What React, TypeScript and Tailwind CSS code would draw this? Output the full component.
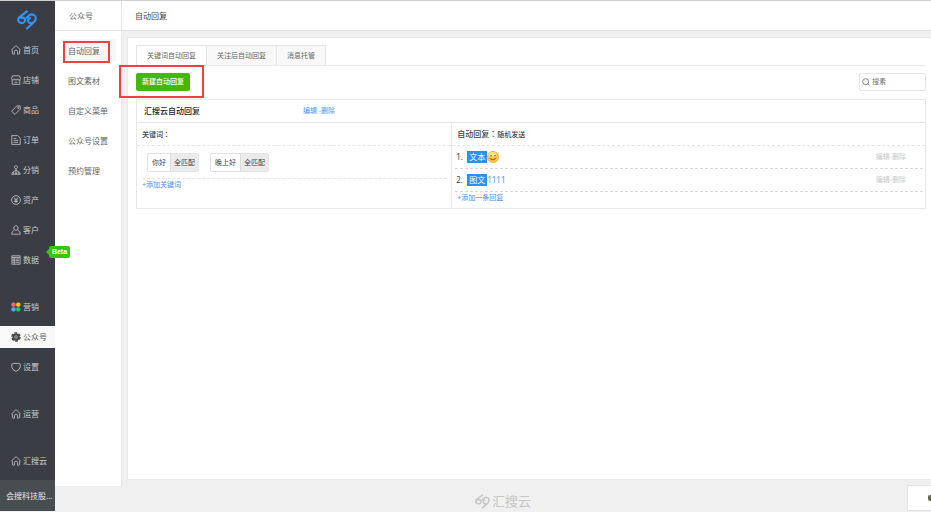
import React from "react";

const mainNav = [
    { label: "首页", icon: "home" },
    { label: "店铺", icon: "shop" },
    { label: "商品", icon: "tag" },
    { label: "订单", icon: "order" },
    { label: "分销", icon: "share" },
    { label: "资产", icon: "money" },
    { label: "客户", icon: "user" },
    { label: "数据", icon: "data", beta: true },
];

const toolNav = [
    { label: "营销", icon: "market" },
    { label: "公众号", icon: "gear", active: true },
    { label: "设置", icon: "shield" },
];

const subNav = ["自动回复", "图文素材", "自定义菜单", "公众号设置", "预约管理"];

const tabs = ["关键词自动回复", "关注后自动回复", "消息托管"];

const keywords = ["你好", "晚上好"];

const replies = [
    { type: "文本", text: "" },
    { type: "图文", text: "1111" },
];

function Logo(props: any) {
    return (
        <svg viewBox="0 0 20 20" className={props.className} fill="none" stroke="currentColor" strokeWidth="2.1" strokeLinejoin="round">
            <path d="M10.6 .8 2.2 7.4C.4 9 .9 12.8 4.2 13.1 6.8 13.3 8.8 11 7.9 9 7 7.3 4.8 7.2 3.4 8.3" />
            <path d="M9 8.2 12.4 5.2C15.2 3.2 19 5.2 18.8 8.4 18.7 10.2 17.8 11.4 16.6 12.4L9.4 19M16.6 12.4C14.6 13.9 11.2 13.2 11 10.6 10.9 9 12.2 8 13.8 8" />
        </svg>
    )
}

function NavIcon(props: any) {
    const line = { fill: "none", stroke: "currentColor", strokeWidth: 0.8 };

    return (
        <svg viewBox="0 0 10 10" className="w-[10px] h-[10px] shrink-0" aria-hidden="true">
            {props.name === "home" && <path {...line} d="M3.4 9.2H2.2Q1.4 9.2 1.4 8.4V5.4Q.2 5.2 .9 4.5L4.2 1.3Q5 .6 5.8 1.3L9.1 4.5Q9.8 5.2 8.6 5.4V8.4Q8.6 9.2 7.8 9.2H6.6V6.6Q6.6 5.2 5 5.2T3.4 6.6Z" />}
            {props.name === "shop" && <path {...line} d="M1.6.8H8.4L9.5 3.4Q9.5 5 8 5T6.5 3.8Q6.5 5 5 5T3.5 3.8Q3.5 5 2 5T.5 3.4ZM1.2 5V9.3H8.8V5M3.5 7.2H6.5" />}
            {props.name === "tag" && <><path {...line} d="M5.8 1 9 .8 9.4 4 4 9.4.6 6.2Z" /><circle {...line} cx="7.3" cy="2.9" r=".7" /></>}
            {props.name === "order" && <path {...line} d="M.8.6H6.8L9.2 3V9.4H.8ZM2.6 3.4H5.4M2.6 5.3H7.2M2.6 7.3H7.2" />}
            {props.name === "share" && <path {...line} d="M5 .6A1.5 1.5 0 1 1 4.9.6M5 3.6V8M5 5 2 7M5 5 8 7M.7 9.3 2 7 3.3 9.3ZM6.7 9.3 8 7 9.3 9.3ZM4 9.3 5 7.6 6 9.3Z" />}
            {props.name === "money" && <><circle {...line} cx="5" cy="5" r="4.4" /><path {...line} d="M3.1 2.5 5 4.8 6.9 2.5M5 4.8V8M3.2 5H6.8M3.2 6.5H6.8" /></>}
            {props.name === "user" && <path {...line} d="M5 .7A2.2 2.3 0 1 1 4.9.7M3.4 5Q.8 6.2.7 9.2H9.3Q9.2 6.2 6.6 5" />}
            {props.name === "data" && <path {...line} d="M.9.8H9.1V9.2H.9ZM.9 2.4H9.1M3.4 2.4V9.2M4.4 4H8M4.4 5.6H8M4.4 7.3H8M1.4 4H3M1.4 5.6H3M1.4 7.3H3" />}
            {props.name === "shield" && <path {...line} d="M.8 1.9Q2 2 2.8 1.2 5 2.2 7.2 1.2 8 2 9.2 1.9V5Q8.8 8 5 9.4 1.2 8 .8 5Z" />}
            {props.name === "market" && (
                <>
                    <rect x=".3" y=".4" width="4.4" height="4.4" rx="1.8" fill="#f8626c" />
                    <rect x="5.1" y=".4" width="4.4" height="4.4" rx="1.8" fill="#fdc31c" />
                    <rect x=".3" y="5.2" width="4.4" height="4.4" rx="1.8" fill="#59a3f8" />
                    <rect x="5.1" y="5.2" width="4.4" height="4.4" rx="1.8" fill="#20c75a" />
                </>
            )}
            {props.name === "gear" && (
                <>
                    <circle cx="5" cy="5" r="3.7" fill="#484848" />
                    <circle cx="5" cy="5" r="4.1" fill="none" stroke="#484848" strokeWidth="1.4" strokeDasharray="2.7 1.594" />
                    <circle cx="5" cy="5" r="1.3" fill="none" stroke="#ccc" strokeWidth=".7" />
                </>
            )}
        </svg>
    )
}

function NavItem(props: any) {
    return (
        <li className="relative">
            <a href="#" className={`flex items-center gap-[2px] h-[22px] pl-[11px] whitespace-nowrap ${props.active ? "bg-[#f9f9f9] text-[#555]" : "text-[#c9cacc]"}`}>
                <NavIcon name={props.icon} />
                <span>{props.label}</span>
            </a>
            {props.beta && (
                <span className="absolute left-[49px] -top-[3px] z-10 w-[21px] h-3 rounded-xs bg-[#35c60f] text-white text-[7px] leading-3 text-center font-bold font-['Liberation_Sans',sans-serif]">
                    <i className="absolute -left-[3px] top-[3px] border-y-3 border-r-3 border-y-transparent border-r-[#35c60f]"></i>
                    Beta
                </span>
            )}
        </li>
    )
}

// the TC face centres the full-width colon
function Colon() {
    return <span className="font-['Noto_Sans_CJK_TC',sans-serif]">：</span>
}

function Smile() {
    return (
        <svg viewBox="0 0 12 12" className="w-3 h-3" role="img" aria-label="微笑">
            <circle cx="6" cy="6" r="5.7" fill="#f8c936" stroke="#dc9a26" strokeWidth=".5" />
            <ellipse cx="5.4" cy="3.6" rx="4" ry="2.6" fill="#fde375" />
            <ellipse cx="3.8" cy="4.6" rx="1.3" ry="1" fill="#fff" />
            <ellipse cx="8" cy="4.6" rx="1.3" ry="1" fill="#fff" />
            <circle cx="4" cy="4.7" r=".8" fill="#4c3411" />
            <circle cx="8" cy="4.7" r=".8" fill="#4c3411" />
            <path d="M2.8 7.4Q6 10.4 9.2 7.4" fill="none" stroke="#a8401f" strokeWidth=".9" />
        </svg>
    )
}

export default function App() {
    return (
        <div className="relative flex min-h-screen border-t border-[#cfcfcf] bg-[#f0f0f0] text-[8px] leading-3 text-[#666] overflow-hidden font-['Noto_Sans','Noto_Sans_CJK_SC',sans-serif]">
            <aside className="flex flex-col w-[55px] shrink-0 bg-[#3b3d44] mb-px">
                <a href="#" aria-label="汇搜云" className="block pt-[9px] pl-[17px] h-[38px] text-[#3296fa]">
                    <Logo className="w-5 h-5" />
                </a>
                <ul className="flex flex-col gap-2">
                    {mainNav.map((item) => <NavItem key={item.label} {...item} />)}
                </ul>
                <ul className="flex flex-col gap-2 mt-[25px]">
                    {toolNav.map((item) => <NavItem key={item.label} {...item} />)}
                </ul>
                <ul className="flex flex-col gap-[25px] mt-[25px]">
                    <NavItem label="运营" icon="home" />
                    <NavItem label="汇搜云" icon="home" />
                </ul>
                <div className="mt-auto h-[31px] bg-[#484d50] px-[6px] leading-[31px] text-[#e4e5e5] whitespace-nowrap text-[8px]">会搜科技股...</div>
            </aside>

            <div className="flex flex-col flex-1 min-w-0">
                <div className="flex flex-1">
                    <nav className="w-[67px] shrink-0 bg-white border-r border-[#e6e6e6]">
                        <h2 className="h-[30px] pl-[14px] leading-[30px] border-b border-[#e8e8e8]">公众号</h2>
                        <ul className="flex flex-col gap-2 pt-2 pl-[6px] pr-[5px]">
                            {subNav.map((name, i) => (
                                <li key={name} className="relative">
                                    <a href="#" className={`block h-[22px] leading-[23px] pl-[7px] whitespace-nowrap ${i === 0 ? "bg-[#f7f7f7]" : ""}`}>{name}</a>
                                    {i === 0 && <div className="absolute left-[2px] top-[2px] w-[47px] h-[22px] border-2 border-[#f23f3f]"></div>}
                                </li>
                            ))}
                        </ul>
                    </nav>

                    <main className="flex flex-col flex-1 min-w-0">
                        <h1 className="h-[30px] pl-[13px] leading-[30px] bg-white border-b border-[#e3e3e3] text-[#444]">自动回复</h1>

                        <section className="flex-1 mt-[6px] ml-[5px] mb-[6px] pt-[7px] pl-[8px] pr-[5px] bg-white border border-r-0 border-[#e9e9e9] text-[7px]">
                            <div className="flex border-b border-[#ebebeb]" role="tablist">
                                {tabs.map((tab, i) => (
                                    <button key={tab} role="tab" aria-selected={i === 0} className={`h-5 px-[10px] border border-b-0 border-[#e6e6e6] whitespace-nowrap -mr-px ${i === 0 ? "bg-white -mb-px" : "bg-[#f8f8f8]"}`}>{tab}</button>
                                ))}
                            </div>

                            <div className="flex justify-between items-center pt-[7px] pb-2">
                                <div className="relative">
                                    <button className="block h-[18px] px-[6px] rounded-xs bg-[#44b803] text-white font-medium">新建自动回复</button>
                                    <div className="absolute -left-[17px] -top-[8px] w-[85px] h-[33px] border-2 border-[#f23f3f]"></div>
                                </div>
                                <label className="flex items-center gap-[2px] w-[67px] h-[18px] px-[2px] border border-[#e6e6e6] rounded-xs bg-white">
                                    <svg viewBox="0 0 8 8" className="w-2 h-2 shrink-0" fill="none" stroke="#666" strokeWidth=".8">
                                        <circle cx="3.7" cy="3.7" r="3" />
                                        <path d="M5.8 5.8 7.6 7.6" />
                                    </svg>
                                    <input type="text" placeholder="搜素" aria-label="搜素" className="w-full min-w-0 outline-none placeholder:text-[#777]" />
                                </label>
                            </div>

                            <div className="border border-[#e8e8e8] text-[#444]">
                                <div className="flex items-center h-[23px] border-b border-[#e8e8e8]">
                                    <h3 className="w-[166px] pl-[7px] text-[8px] font-medium text-[#222]">汇搜云自动回复</h3>
                                    <div className="flex text-[#4a94f7]">
                                        <a href="#">编辑</a>
                                        <span className="whitespace-pre"> -</span>
                                        <a href="#">删除</a>
                                    </div>
                                </div>

                                <div className="grid grid-cols-[2fr_3fr]">
                                    <div className="border-r border-[#ebebeb]">
                                        <h4 className="h-[23px] pl-[5px] leading-[22px] font-medium border-b border-dashed border-[#e6e6e6]">关键词<Colon /></h4>
                                        <div className="ml-[5px] mr-1 pl-[5px] flex items-center gap-[11px] h-[33px] border-b border-dashed border-[#e6e6e6]">
                                            {keywords.map((word) => (
                                                <div key={word} className="flex h-[19px] leading-[17px] border border-[#e3e3e3] rounded-xs whitespace-nowrap">
                                                    <span className="px-1">{word}</span>
                                                    <button className="px-[3px] bg-[#ebebeb] border-l border-[#dcdcdc]">全匹配</button>
                                                </div>
                                            ))}
                                        </div>
                                        <a href="#" className="inline-block pl-[5px] text-[#4a8cf7]">+添加关键词</a>
                                    </div>

                                    <div className="h-[85px]">
                                        <h4 className="h-[23px] pl-[5px] leading-[22px] font-medium border-b border-dashed border-[#e6e6e6]"><span className="text-[8px]">自动回复<Colon /></span>随机发送</h4>
                                        <ol className="pl-[3px] pr-[2px]">
                                            {replies.map((reply, i) => (
                                                <li key={i} className="flex items-center h-[23px] pl-px border-b border-dashed border-[#d8d8d8] text-[8px]">
                                                    <span className="w-[11px]">{i + 1}.</span>
                                                    <span className="px-[2px] bg-[#2b8ff7] text-white">{reply.type}</span>
                                                    {reply.text ? <span className="text-[#4a9bf7]">{reply.text}</span> : <Smile />}
                                                    <span className="flex ml-auto pr-[17px] text-[7px] text-[#c8c8c8]">
                                                        <a href="#">编辑</a>-<a href="#">删除</a>
                                                    </span>
                                                </li>
                                            ))}
                                        </ol>
                                        <a href="#" className="inline-block pl-[5px] text-[#4a8cf7]">+添加一条回复</a>
                                    </div>
                                </div>
                            </div>
                        </section>
                    </main>
                </div>

                <footer className="flex items-center justify-center gap-[2px] h-[26px] pl-5 pt-[4px] text-[13px] text-[#c6c6c6]">
                    <Logo className="w-[15px] h-[15px]" />
                    <span>汇搜云</span>
                </footer>
            </div>

            <button aria-label="客服" className="absolute right-0 bottom-px w-6 h-[26px] flex items-center justify-end bg-white border border-r-0 border-[#e4e4e4]">
                <i className="w-[3px] h-[6px] bg-[#67674f] rounded-l-xs"></i>
            </button>
        </div>
    )
}
